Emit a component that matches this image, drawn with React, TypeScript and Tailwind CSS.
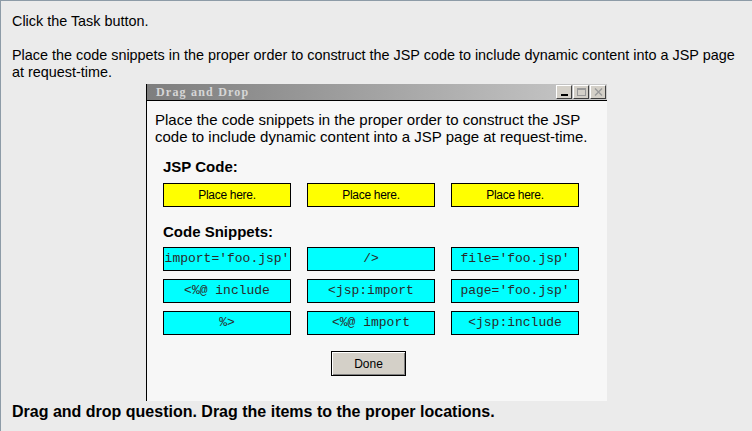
import React from 'react';

const slots = ['Place here.', 'Place here.', 'Place here.'];

const snippets = [
  "import='foo.jsp'",
  '/>',
  "file='foo.jsp'",
  '<%@ include',
  '<jsp:import',
  "page='foo.jsp'",
  '%>',
  '<%@ import',
  '<jsp:include',
];

const TitleButton: React.FC<{ children: React.ReactNode }> = ({ children }) => (
  <div className="w-[16px] h-[14px] bg-[#d4d0c8] border border-t-white border-l-white border-r-[#404040] border-b-[#404040] flex items-center justify-center">
    {children}
  </div>
);

export default function App() {
  return (
    <div
      className="w-[752px] h-[431px] overflow-hidden bg-[#ebebeb] border-t border-l border-[#8d9ba7] text-black"
      style={{ fontFamily: '"Liberation Sans", Arial, sans-serif' }}
    >
      <div className="pl-[11px] pt-[12px]">
        <p className="text-[14.4px] leading-[17px]">Click the Task button.</p>
        <p className="mt-[17px] text-[14.4px] leading-[17px] w-[728px]">
          Place the code snippets in the proper order to construct the JSP code to include dynamic content into a JSP page at request-time.
        </p>
      </div>

      {/* window */}
      <div className="mt-[3px] ml-[145px] w-[461px] h-[317px] border-l border-black flex flex-col">
        <div className="h-[17px] flex items-center justify-between bg-gradient-to-r from-[#7e7e7e] to-[#cacaca] border-b border-black pl-[9px] pr-[1px]">
          <span
            className="text-[12px] font-bold tracking-[1.2px] text-[#d6d6d6] leading-none"
            style={{ fontFamily: '"Liberation Serif", "Times New Roman", serif' }}
          >
            Drag and Drop
          </span>
          <div className="flex gap-[1px]">
            <TitleButton>
              <div className="w-[7px] h-[2px] bg-black mt-[6px]" />
            </TitleButton>
            <TitleButton>
              <div className="w-[9px] h-[8px] border border-[#9a9a9a] border-t-2" />
            </TitleButton>
            <TitleButton>
              <svg width="9" height="8" viewBox="0 0 9 8">
                <path d="M1 0.5 L8 7.5 M8 0.5 L1 7.5" stroke="#9a9a9a" strokeWidth="1.4" />
              </svg>
            </TitleButton>
          </div>
        </div>

        <div className="flex-1 bg-[#f7f7f7] pl-[8px] pt-[10px]">
          <p className="text-[15px] leading-[17px] w-[445px]">
            Place the code snippets in the proper order to construct the JSP code to include dynamic content into a JSP page at request-time.
          </p>

          <div className="pl-[8px]">
            <h3 className="mt-[13px] text-[15px] leading-[18px] font-bold">JSP Code:</h3>
            <div className="mt-[7px] grid grid-cols-[128px_128px_128px] gap-x-[16px]">
              {slots.map((s, i) => (
                <div
                  key={i}
                  className="h-[24px] bg-[#ffff00] border border-black flex items-center justify-center text-[12px] tracking-[-0.3px]"
                >
                  {s}
                </div>
              ))}
            </div>

            <h3 className="mt-[16px] text-[15px] leading-[18px] font-bold">Code Snippets:</h3>
            <div className="mt-[6px] grid grid-cols-[128px_128px_128px] gap-x-[16px] gap-y-[8px]">
              {snippets.map((s, i) => (
                <div
                  key={i}
                  className="h-[24px] bg-[#00ffff] border border-black flex items-center justify-center text-[13px] text-[#2a2a2a] whitespace-pre overflow-hidden"
                  style={{ fontFamily: '"Liberation Mono", "Courier New", monospace' }}
                >
                  {s}
                </div>
              ))}
            </div>

            <div className="mt-[16px] flex justify-center w-[411px]">
              <button className="w-[75px] h-[25px] bg-[#d4d0c8] border border-black shadow-[inset_1px_1px_0_#ffffff,inset_-1px_-1px_0_#808080] text-[12px]">
                Done
              </button>
            </div>
          </div>
        </div>
      </div>

      <p className="pl-[11px] mt-[2px] text-[16px] leading-[18px] font-bold">
        Drag and drop question. Drag the items to the proper locations.
      </p>
    </div>
  );
}
